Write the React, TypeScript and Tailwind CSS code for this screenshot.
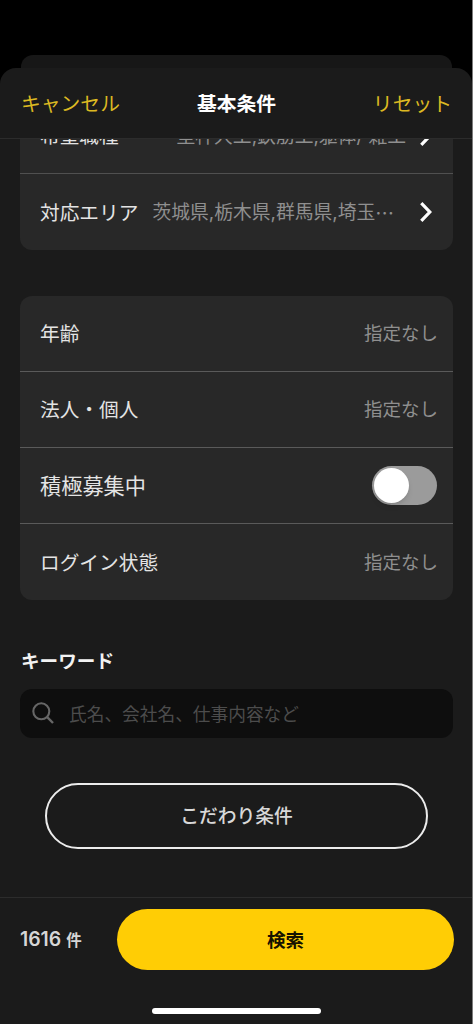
import React, { useState } from "react";

const CARD = "ml-5 mr-[19px] shrink-0 overflow-hidden rounded-xl bg-[#282828]";

function ChevronIcon() {
  return (
    <svg viewBox="0 0 12 20" className="h-5 w-3 shrink-0" fill="none" stroke="#fff" strokeWidth="3.2">
      <path d="M1.3 1.2 9.8 10 1.3 18.8" />
    </svg>
  );
}

function SearchIcon() {
  return (
    <svg viewBox="0 0 22 22" className="h-[22px] w-[22px] shrink-0" fill="none" stroke="#666" strokeWidth="2.1">
      <circle cx="9.3" cy="9.3" r="8" />
      <path d="m15.2 15.2 5.8 5.8" strokeWidth="2.4" />
    </svg>
  );
}

type LinkRowProps = {
  label: string;
  value: string;
  clipped?: boolean;
};

function LinkRow({ label, value, clipped }: LinkRowProps) {
  return (
    <button className="flex h-[76px] w-full items-center border-[#505050] pl-5 pr-[21px] not-last:border-b">
      <span className="shrink-0 pt-[3px] text-[19.7px] text-[#e4e4e4]">{label}</span>
      <span
        className={`ml-3.5 flex min-w-0 flex-1 whitespace-nowrap pt-[3px] text-[18.8px] text-[#8f8f8f] ${
          clipped ? "justify-start" : "justify-end"
        }`}
      >
        {value}
        {clipped && (
          <span lang="ja" className="font-['Noto_Sans_CJK_JP',sans-serif] leading-none">
            …
          </span>
        )}
      </span>
      <span className="ml-3.5 flex">
        <ChevronIcon />
      </span>
    </button>
  );
}

type RowProps = {
  label: string;
  large?: boolean;
  children: React.ReactNode;
};

function Row({ label, large, children }: RowProps) {
  return (
    <div className="flex h-[76px] items-center justify-between border-[#5a5a5a] pl-5 pr-[15px] not-last:border-b">
      <span className={large ? "pt-0.5 text-[21.2px] text-[#e4e4e4]" : "pt-[3px] text-[19.7px] text-[#e4e4e4]"}>
        {label}
      </span>
      {children}
    </div>
  );
}

function Unset() {
  return <span className="text-[18.5px] text-[#8f8f8f]">指定なし</span>;
}

export default function App() {
  const [recruiting, setRecruiting] = useState(false);
  const [keyword, setKeyword] = useState("");

  return (
    <div className="flex h-[1024px] w-[473px] flex-col overflow-hidden border-r border-[#7c7c7c] bg-black pt-[55px] font-['Inter','Noto_Sans_CJK_JP',sans-serif] leading-none">
      {/* Sheet underneath */}
      <div className="ml-[21px] mr-5 h-[13px] shrink-0 rounded-t-xl bg-[#171717]" />

      <div className="flex min-h-0 flex-1 flex-col rounded-t-2xl bg-[#1b1b1b]">
        <header className="flex h-[71px] shrink-0 items-center justify-between border-b border-[#2c2c2c] pl-[21px] pr-5 pt-[3px]">
          <button className="w-[100px] text-left text-[19.8px] text-[#dcb922]">キャンセル</button>
          <h1 className="text-[19.8px] font-bold text-white">基本条件</h1>
          <button className="w-[100px] text-right text-[19.8px] text-[#dcb922]">リセット</button>
        </header>

        <main className="flex min-h-0 flex-1 flex-col overflow-hidden">
          {/* Scrolled partly under the header */}
          <section className={`${CARD} -mt-[41px]`}>
            <LinkRow label="希望職種" value="型枠大工,鉄筋工,躯体/ 雑工" />
            <LinkRow label="対応エリア" value="茨城県,栃木県,群馬県,埼玉" clipped />
          </section>

          <section className={`${CARD} mt-[46px]`}>
            <Row label="年齢">
              <Unset />
            </Row>
            <Row label="法人・個人">
              <Unset />
            </Row>
            <Row label="積極募集中" large>
              <button
                role="switch"
                aria-checked={recruiting}
                onClick={() => setRecruiting(!recruiting)}
                className={`mr-px flex h-[39px] w-[65px] items-center rounded-full px-[2px] ${
                  recruiting ? "justify-end bg-[#ffcd05]" : "bg-[#9b9b9b]"
                }`}
              >
                <span className="h-[35px] w-[35px] rounded-full bg-white shadow-md" />
              </button>
            </Row>
            <Row label="ログイン状態">
              <Unset />
            </Row>
          </section>

          <h2 className="mx-[21px] mt-[52px] text-[18.6px] font-bold text-[#f2f2f2]">キーワード</h2>
          <label className="ml-5 mr-[19px] mt-[18px] flex h-[49px] shrink-0 items-center rounded-xl bg-[#0e0e0e] pl-3">
            <SearchIcon />
            <input
              value={keyword}
              onChange={(e) => setKeyword(e.target.value)}
              placeholder="氏名、会社名、仕事内容など"
              className="ml-[15px] h-full min-w-0 flex-1 bg-transparent pt-0.5 text-[17.7px] text-white outline-none placeholder:text-[#4c4c4c]"
            />
          </label>

          <button className="ml-[45px] mt-[45px] h-[66px] w-[383px] shrink-0 rounded-full border-2 border-[#ececec] pt-1 text-[18.8px] font-medium text-[#d8d8d8]">
            こだわり条件
          </button>
        </main>

        <footer className="flex h-[127px] shrink-0 flex-col border-t border-[#2c2c2c] pt-[11px]">
          <div className="flex items-center pl-5">
            <p className="flex w-[97px] shrink-0 items-baseline gap-[5px] text-[19.4px] font-semibold text-[#d6d6d6]">
              1616
              <span className="text-[15.5px] font-bold">件</span>
            </p>
            <button className="h-[61px] w-[337px] shrink-0 rounded-full bg-[#ffcd05] pt-px text-[18.6px] font-bold text-[#161200]">
              検索
            </button>
          </div>
          <div className="mx-auto mt-[38px] h-1.5 w-[169px] rounded-full bg-white" />
        </footer>
      </div>
    </div>
  );
}
